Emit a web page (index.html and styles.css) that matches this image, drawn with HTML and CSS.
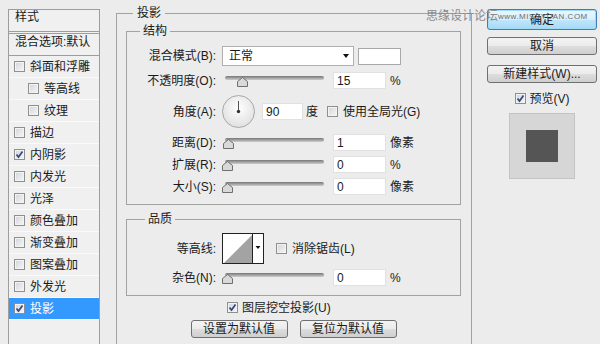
FILE: index.html
```html
<!DOCTYPE html>
<html>
<head>
    <meta charset="utf-8">
    <meta name="viewport" content="width=device-width, initial-scale=1">
    <title>图层样式</title>
    <link rel="stylesheet" href="styles.css">
</head>
<body>
    <div class="styleList">
        <div class="listHeader">样式</div>
        <div class="listBlend">混合选项:默认</div>
        <div class="listItem"><span class="checkBox"></span>斜面和浮雕</div>
        <div class="listItem subItem"><span class="checkBox"></span>等高线</div>
        <div class="listItem subItem"><span class="checkBox"></span>纹理</div>
        <div class="listItem"><span class="checkBox"></span>描边</div>
        <div class="listItem"><span class="checkBox checked"><svg viewBox="0 0 9 9"><path d="M1.5 4.5L3.5 7L7.5 1.5"/></svg></span>内阴影</div>
        <div class="listItem"><span class="checkBox"></span>内发光</div>
        <div class="listItem"><span class="checkBox"></span>光泽</div>
        <div class="listItem"><span class="checkBox"></span>颜色叠加</div>
        <div class="listItem"><span class="checkBox"></span>渐变叠加</div>
        <div class="listItem"><span class="checkBox"></span>图案叠加</div>
        <div class="listItem"><span class="checkBox"></span>外发光</div>
        <div class="listItem selectedItem"><span class="checkBox checked"><svg viewBox="0 0 9 9"><path d="M1.5 4.5L3.5 7L7.5 1.5"/></svg></span>投影</div>
    </div>

    <div class="mainPanel">
        <fieldset class="outerGroup">
            <legend>投影</legend>

            <fieldset class="innerGroup structureGroup">
                <legend>结构</legend>
                <div class="formRow blendRow">
                    <span class="rowLabel">混合模式(B):</span>
                    <div class="selectBox">正常<span class="selectArrow"></span></div>
                    <div class="colorSwatch"></div>
                </div>
                <div class="formRow opacityRow">
                    <span class="rowLabel">不透明度(O):</span>
                    <div class="slider">
                        <div class="sliderTrack"></div>
                        <svg class="sliderThumb" style="left: 15px" viewBox="0 0 11 10"><polygon points="0.5,9.5 0.5,4.5 5.5,0.5 10.5,4.5 10.5,9.5"/></svg>
                    </div>
                    <input class="valueBox" type="text" value="15">
                    <span class="unit">%</span>
                </div>
                <div class="formRow angleRow">
                    <span class="rowLabel">角度(A):</span>
                    <svg class="angleDial" viewBox="0 0 33 33">
                        <defs>
                            <radialGradient id="dialFill" cx="50%" cy="40%" r="60%">
                                <stop offset="0" stop-color="#ffffff"/>
                                <stop offset="1" stop-color="#e0e0e0"/>
                            </radialGradient>
                        </defs>
                        <circle cx="16.5" cy="16.5" r="16" fill="url(#dialFill)" stroke="#a8a8a8"/>
                        <line x1="16.5" y1="16.5" x2="16.5" y2="6" stroke="#555" stroke-width="1"/>
                        <circle cx="16.5" cy="16.5" r="1.7" fill="#333"/>
                    </svg>
                    <input class="valueBox angleBox" type="text" value="90">
                    <span class="unit">度</span>
                    <span class="checkBox globalLight"></span>
                    <span>使用全局光(G)</span>
                </div>
                <div class="formRow distanceRow">
                    <span class="rowLabel">距离(D):</span>
                    <div class="slider">
                        <div class="sliderTrack"></div>
                        <svg class="sliderThumb" style="left: 1px" viewBox="0 0 11 10"><polygon points="0.5,9.5 0.5,4.5 5.5,0.5 10.5,4.5 10.5,9.5"/></svg>
                    </div>
                    <input class="valueBox" type="text" value="1">
                    <span class="unit">像素</span>
                </div>
                <div class="formRow spreadRow">
                    <span class="rowLabel">扩展(R):</span>
                    <div class="slider">
                        <div class="sliderTrack"></div>
                        <svg class="sliderThumb" style="left: 0px" viewBox="0 0 11 10"><polygon points="0.5,9.5 0.5,4.5 5.5,0.5 10.5,4.5 10.5,9.5"/></svg>
                    </div>
                    <input class="valueBox" type="text" value="0">
                    <span class="unit">%</span>
                </div>
                <div class="formRow sizeRow">
                    <span class="rowLabel">大小(S):</span>
                    <div class="slider">
                        <div class="sliderTrack"></div>
                        <svg class="sliderThumb" style="left: 0px" viewBox="0 0 11 10"><polygon points="0.5,9.5 0.5,4.5 5.5,0.5 10.5,4.5 10.5,9.5"/></svg>
                    </div>
                    <input class="valueBox" type="text" value="0">
                    <span class="unit">像素</span>
                </div>
            </fieldset>

            <fieldset class="innerGroup qualityGroup">
                <legend>品质</legend>
                <div class="formRow contourRow">
                    <span class="rowLabel">等高线:</span>
                    <svg class="contourPicker" viewBox="0 0 42 31">
                        <rect x="0.5" y="0.5" width="41" height="30" fill="#fff" stroke="#222"/>
                        <polygon points="2,30 30.5,1.5 30.5,30" fill="#a3a3a3"/>
                        <line x1="30.5" y1="0" x2="30.5" y2="31" stroke="#222"/>
                        <polygon points="33.5,13 38.5,13 36,16" fill="#111"/>
                    </svg>
                    <span class="checkBox antiAlias"></span>
                    <span>消除锯齿(L)</span>
                </div>
                <div class="formRow noiseRow">
                    <span class="rowLabel">杂色(N):</span>
                    <div class="slider">
                        <div class="sliderTrack"></div>
                        <svg class="sliderThumb" style="left: 0px" viewBox="0 0 11 10"><polygon points="0.5,9.5 0.5,4.5 5.5,0.5 10.5,4.5 10.5,9.5"/></svg>
                    </div>
                    <input class="valueBox" type="text" value="0">
                    <span class="unit">%</span>
                </div>
            </fieldset>

            <div class="knockoutRow">
                <span class="checkBox checked"><svg viewBox="0 0 9 9"><path d="M1.5 4.5L3.5 7L7.5 1.5"/></svg></span>
                <span>图层挖空投影(U)</span>
            </div>
            <div class="defaultButtons">
                <button class="dialogButton">设置为默认值</button>
                <button class="dialogButton">复位为默认值</button>
            </div>
        </fieldset>
    </div>

    <div class="actionColumn">
        <button class="dialogButton okButton">确定</button>
        <button class="dialogButton cancelButton">取消</button>
        <button class="dialogButton newStyleButton">新建样式(W)...</button>
        <div class="previewToggle">
            <span class="checkBox checked"><svg viewBox="0 0 9 9"><path d="M1.5 4.5L3.5 7L7.5 1.5"/></svg></span>
            <span>预览(V)</span>
        </div>
        <div class="previewBox"><div class="previewSwatch"></div></div>
    </div>

    <div class="watermark">思缘设计论坛</div>
    <div class="watermarkUrl">www.MISSYUAN.COM</div>
</body>
</html>
```

FILE: styles.css
```css
body {
    margin: 0;
    width: 600px;
    height: 344px;
    overflow: hidden;
    position: relative;
    display: flex;
    align-items: flex-start;
    background-color: #ececec;
    color: #1a1a1a;
    font-family: "Liberation Sans", "Noto Sans CJK SC", sans-serif;
    font-size: 12px;
    line-height: 14px;
}

/* left list of effects */
.styleList {
    margin: 9px 0 0 8px;
    width: 92px;
    height: 345px;
    box-sizing: border-box;
    flex-shrink: 0;
    border: 1px solid #9d9d9d;
    background-color: #f0f0f0;
}

.listHeader {
    height: 21px;
    padding-left: 6px;
    border-bottom: 1px solid #9d9d9d;
}

.listBlend {
    margin-top: 1px;
    height: 20px;
    padding: 1px 0 0 6px;
    border-top: 1px solid #9d9d9d;
    border-bottom: 1px solid #9d9d9d;
}

.listItem {
    display: flex;
    align-items: center;
    height: 21px;
    padding-left: 5px;
    border-bottom: 1px solid #fafafa;
}

.listItem .checkBox {
    margin-right: 5px;
}

.subItem {
    padding-left: 19px;
}

.selectedItem {
    background-color: #3399ff;
    color: #fff;
}

.checkBox {
    display: inline-block;
    width: 11px;
    height: 11px;
    box-sizing: border-box;
    flex-shrink: 0;
    border: 1px solid #8e8f8f;
    background: linear-gradient(135deg, #d2d4d8, #f7f7f7);
    box-shadow: inset 0 0 0 1px #f3f3f3;
}

.checkBox svg {
    display: block;
    width: 9px;
    height: 9px;
}

.checkBox path {
    fill: none;
    stroke: #33487e;
    stroke-width: 1.7;
}

/* main settings panel */
.mainPanel {
    margin-left: 16px;
    width: 356px;
    flex-shrink: 0;
}

fieldset {
    min-width: 0;
    margin: 0;
    border: 1px solid #a2a2a2;
}

legend {
    line-height: 14px;
}

.outerGroup {
    margin-top: 6px;
    height: 400px;
    padding: 4px 10px 0 9px;
}

.outerGroup > legend {
    margin-left: 7px;
    padding: 0 4px;
}

.innerGroup {
    padding: 8px 0 9px 0;
}

.innerGroup > legend {
    margin-left: 13px;
    padding: 0 3px;
}

.qualityGroup {
    margin-top: 7px;
    padding-top: 7px;
}

.qualityGroup > legend {
    margin-left: 18px;
}

.formRow {
    display: flex;
    align-items: center;
    height: 17px;
    margin-top: 5px;
}

.blendRow {
    height: 20px;
    margin-top: 0;
}

.opacityRow,
.distanceRow {
    margin-top: 6px;
}

.angleRow {
    height: 33px;
    margin-top: 6px;
}

.contourRow {
    height: 31px;
    margin-top: 0;
}

.rowLabel {
    width: 89px;
    margin-right: 6px;
    flex-shrink: 0;
    text-align: right;
}

.selectBox {
    display: flex;
    align-items: center;
    justify-content: space-between;
    width: 132px;
    height: 20px;
    box-sizing: border-box;
    padding: 0 4px 0 6px;
    border: 1px solid #b0b0b0;
    background-color: #fff;
}

.selectArrow {
    width: 0;
    height: 0;
    border-top: 4px solid #111;
    border-left: 3.5px solid transparent;
    border-right: 3.5px solid transparent;
}

.colorSwatch {
    width: 43px;
    height: 17px;
    margin-left: 4px;
    box-sizing: border-box;
    border: 1px solid #a8a8a8;
    background-color: #fff;
}

.slider {
    position: relative;
    width: 105px;
    height: 17px;
    flex-shrink: 0;
}

.sliderTrack {
    margin: 4px 0 0 3px;
    width: 99px;
    height: 4px;
    border-radius: 2px;
    background: linear-gradient(#767676, #cdcdcd);
}

.sliderThumb {
    position: absolute;
    top: 5px;
    width: 11px;
    height: 10px;
}

.sliderThumb polygon {
    fill: #d9d9d9;
    stroke: #6f6f6f;
}

.valueBox {
    width: 53px;
    height: 17px;
    margin: 0 0 0 6px;
    box-sizing: border-box;
    padding: 0 0 0 3px;
    border: 1px solid #e1e1e1;
    background-color: #fff;
    color: #1a1a1a;
    font: inherit;
    outline: none;
}

.unit {
    margin-left: 4px;
}

.angleDial {
    width: 33px;
    height: 33px;
    flex-shrink: 0;
}

.angleBox {
    width: 41px;
    margin-left: 7px;
}

.angleRow .unit {
    margin-left: 3px;
}

.globalLight {
    margin: 0 5px 0 9px;
}

.contourPicker {
    width: 42px;
    height: 31px;
    flex-shrink: 0;
}

.antiAlias {
    margin: 0 5px 0 12px;
}

.knockoutRow {
    display: flex;
    align-items: center;
    height: 13px;
    margin-top: 5px;
    padding-left: 101px;
}

.knockoutRow .checkBox {
    margin-right: 4px;
}

.defaultButtons {
    display: flex;
    justify-content: center;
    gap: 12px;
    margin-top: 6px;
}

.defaultButtons .dialogButton {
    width: 97px;
}

/* buttons */
.dialogButton {
    height: 18px;
    padding: 0;
    border: 1px solid #707070;
    border-radius: 3px;
    background: linear-gradient(#f3f3f3 0%, #ebebeb 50%, #dddddd 51%, #cfcfcf 100%);
    color: #1a1a1a;
    font: inherit;
    line-height: 14px;
}

/* right column */
.actionColumn {
    display: flex;
    flex-direction: column;
    margin-left: 15px;
    width: 110px;
    flex-shrink: 0;
}

.okButton {
    margin-top: 9px;
    height: 21px;
    border-color: #3c7fb1;
    background: linear-gradient(#eaf6fd 0%, #d9f0fc 50%, #bee6fd 51%, #a7d9f5 100%);
    box-shadow: inset 0 0 0 1px #9ddcf5;
}

.cancelButton {
    margin-top: 7px;
}

.newStyleButton {
    margin-top: 10px;
}

.previewToggle {
    display: flex;
    align-items: center;
    align-self: center;
    height: 13px;
    margin-top: 9px;
}

.previewToggle .checkBox {
    margin-right: 4px;
}

.previewBox {
    align-self: center;
    width: 66px;
    height: 66px;
    box-sizing: border-box;
    margin-top: 8px;
    padding: 16px;
    border: 1px solid #c4c4c4;
    background-color: #d6d6d6;
}

.previewSwatch {
    width: 32px;
    height: 32px;
    background-color: #555;
}

/* site watermark over the top right corner */
.watermark {
    position: absolute;
    left: 426px;
    top: 9px;
    color: #8a8a8a;
}

.watermarkUrl {
    position: absolute;
    left: 498px;
    top: 12px;
    color: #6e6e6e;
    font-size: 8px;
    line-height: 9px;
    letter-spacing: 0.5px;
}
```
